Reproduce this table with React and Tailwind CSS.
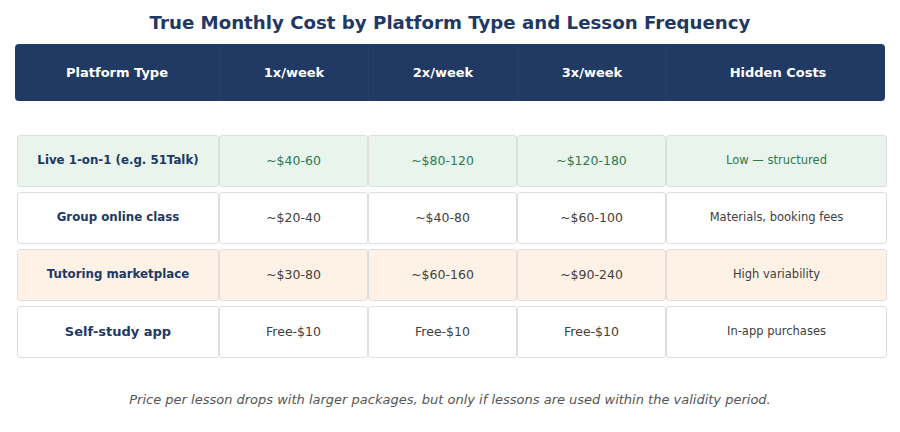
import React from "react";

const rows = [
  {
    name: "Live 1-on-1 (e.g. 51Talk)",
    nameSize: "text-[11.8px]",
    vals: ["~$40-60", "~$80-120", "~$120-180"],
    hidden: "Low — structured",
    bg: "bg-[#e9f4ed]",
    text: "text-[#2e7a4e]",
  },
  {
    name: "Group online class",
    nameSize: "text-[11.8px]",
    vals: ["~$20-40", "~$40-80", "~$60-100"],
    hidden: "Materials, booking fees",
    bg: "bg-white",
    text: "text-[#404040]",
  },
  {
    name: "Tutoring marketplace",
    nameSize: "text-[11.8px]",
    vals: ["~$30-80", "~$60-160", "~$90-240"],
    hidden: "High variability",
    bg: "bg-[#fdf2e5]",
    text: "text-[#404040]",
  },
  {
    name: "Self-study app",
    nameSize: "text-[13px]",
    vals: ["Free-$10", "Free-$10", "Free-$10"],
    hidden: "In-app purchases",
    bg: "bg-white",
    text: "text-[#404040]",
  },
];

const headers = ["Platform Type", "1x/week", "2x/week", "3x/week", "Hidden Costs"];

export default function App() {
  return (
    <div className="w-[900px] h-[432px] bg-white font-['DejaVu_Sans',sans-serif] flex flex-col">
      <h1 className="text-center text-[18.2px] font-bold text-[#1f3864] pt-[11px] leading-[24px]">
        True Monthly Cost by Platform Type and Lesson Frequency
      </h1>

      <div className="mx-[15px] mt-[9px] h-[57px] rounded-[4px] bg-[#213a64] grid grid-cols-[204px_149px_149px_149px_223px]">
        {headers.map((h, i) => (
          <div
            key={h}
            className={`flex items-center justify-center text-white text-[13px] font-bold ${
              i > 0 ? "border-l border-[#273f69]" : ""
            }`}
          >
            {h}
          </div>
        ))}
      </div>

      <div className="mx-[17px] mt-[34px] flex flex-col gap-[5px]">
        {rows.map((r) => (
          <div key={r.name} className="grid grid-cols-[202px_149px_149px_149px_221px] h-[52px]">
            <div
              className={`flex items-center justify-center border border-[#dedede] rounded-[3px] font-bold text-[#1f3864] ${r.nameSize} ${r.bg}`}
            >
              {r.name}
            </div>
            {r.vals.map((v, i) => (
              <div
                key={i}
                className={`flex items-center justify-center border border-[#dedede] rounded-[3px] text-[12.5px] ${r.text} ${r.bg}`}
              >
                {v}
              </div>
            ))}
            <div
              className={`flex items-center justify-center border border-[#dedede] rounded-[3px] text-[11.5px] ${r.text} ${r.bg}`}
            >
              {r.hidden}
            </div>
          </div>
        ))}
      </div>

      <p className="mt-[32px] text-center italic text-[13px] text-[#555555]">
        Price per lesson drops with larger packages, but only if lessons are used within the validity period.
      </p>
    </div>
  );
}
